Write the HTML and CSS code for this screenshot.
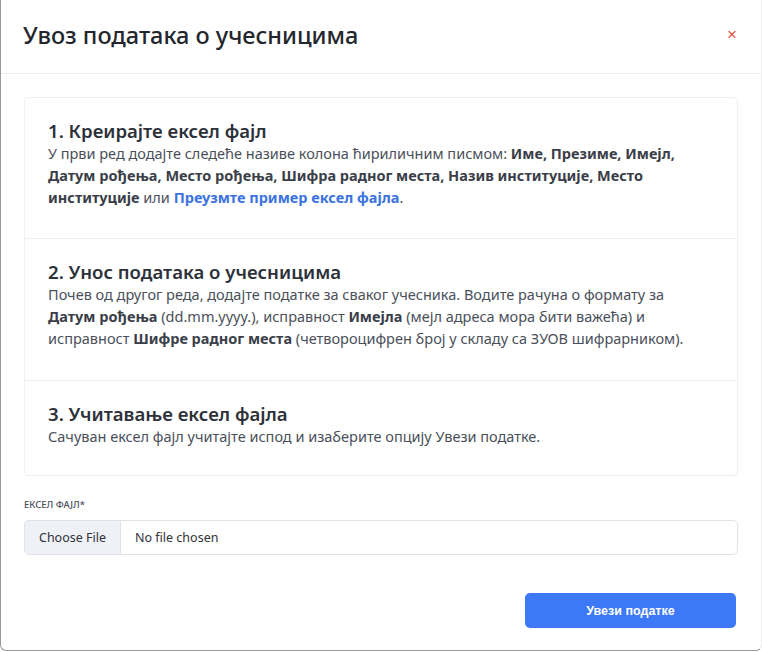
FILE: index.html
```html
<!DOCTYPE html>
<html lang="sr">
<head>
    <meta charset="UTF-8">
    <meta name="viewport" content="width=device-width, initial-scale=1.0">
    <title>Увоз података о учесницима</title>
    <link rel="stylesheet" href="styles.css">
</head>
<body>
    <div class="modal">
        <div class="modal-header">
            <h2>Увоз података о учесницима</h2>
            <button class="close" type="button">&times;</button>
        </div>
        <div class="modal-body">
            <div class="steps">
                <div class="step">
                    <h3>1. Креирајте ексел фајл</h3>
                    <p>У први ред додајте следеће називе колона ћириличним писмом: <b>Име, Презиме, Имејл, Датум рођења, Место рођења, Шифра радног места, Назив институције, Место институције</b> или <a href="#">Преузмте пример ексел фајла</a>.</p>
                </div>
                <div class="step">
                    <h3>2. Унос података о учесницима</h3>
                    <p>Почев од другог реда, додајте податке за сваког учесника. Водите рачуна о формату за <b>Датум рођења</b> (dd.mm.yyyy.), исправност <b>Имејла</b> (мејл адреса мора бити важећа) и исправност <b>Шифре радног места</b> (четвороцифрен број у складу са ЗУОВ шифрарником).</p>
                </div>
                <div class="step">
                    <h3>3. Учитавање ексел фајла</h3>
                    <p>Сачуван ексел фајл учитајте испод и изаберите опцију Увези податке.</p>
                </div>
            </div>

            <label class="field-label">Ексел фајл*</label>
            <div class="file-input">
                <span class="file-btn">Choose File</span>
                <span class="file-name">No file chosen</span>
            </div>
        </div>
        <div class="modal-footer">
            <button class="submit" type="button">Увези податке</button>
        </div>
    </div>
</body>
</html>
```

FILE: styles.css
```css
*,
*:before,
*:after {
    margin: 0;
    padding: 0;
    box-sizing: border-box;
}

body {
    font-family: "Noto Sans", "Open Sans", sans-serif;
    background-color: #ffffff;
    color: #3a3f4b;
    width: 762px;
    height: 652px;
    overflow: hidden;
}

.modal {
    width: 762px;
    height: 651px;
    background: #fff;
    border-left: 1px solid #9a9a9a;
    border-bottom: 1px solid #9a9a9a;
    border-right: 1px solid #ececec;
    border-radius: 0 0 6px 6px;
    display: flex;
    flex-direction: column;
}

.modal-header {
    height: 74px;
    border-bottom: 1px solid #eceef1;
    display: flex;
    align-items: center;
    justify-content: space-between;
    padding: 0 24px 4px 22px;
}

.modal-header h2 {
    font-size: 23.5px;
    font-weight: 500;
    color: #23262d;
}

.close {
    background: none;
    border: none;
    color: #e0533f;
    font-size: 17px;
    line-height: 1;
    font-family: "Liberation Sans", sans-serif;
    cursor: pointer;
}

.modal-body {
    padding: 23px 23px 0 23px;
}

.steps {
    border: 1px solid #eef0f3;
    border-radius: 4px;
}

.step {
    padding: 21px 23px 0 23px;
    border-bottom: 1px solid #eef0f3;
}

.step:nth-child(1) {
    height: 141px;
}

.step:nth-child(2) {
    height: 142px;
}

.step:last-child {
    border-bottom: none;
    height: 94px;
}

.step h3 {
    font-size: 18.6px;
    font-weight: 600;
    color: #2d313a;
    line-height: 23px;
}

.step p {
    font-size: 14.5px;
    line-height: 22px;
    color: #4a4f5a;
}

.step p b {
    font-weight: 700;
    color: #3a3e48;
}

.step p a {
    color: #3b73e0;
    font-weight: 700;
    text-decoration: none;
}

.field-label {
    display: block;
    margin-top: 22px;
    font-size: 9.5px;
    text-transform: uppercase;
    color: #4a4f5a;
    font-weight: 500;
}

.file-input {
    margin-top: 9px;
    height: 35px;
    border: 1px solid #dfe2e6;
    border-radius: 5px;
    display: flex;
    align-items: center;
    font-size: 12.5px;
    color: #2e323a;
    overflow: hidden;
}

.file-btn {
    background: #eef1f5;
    height: 100%;
    width: 96px;
    display: flex;
    align-items: center;
    justify-content: center;
    border-right: 1px solid #dfe2e6;
}

.file-name {
    padding-left: 14px;
}

.modal-footer {
    display: flex;
    justify-content: flex-end;
    padding: 38px 25px 0 0;
}

.submit {
    width: 211px;
    height: 35px;
    background: #3d78f7;
    color: #fff;
    border: none;
    border-radius: 5px;
    font-family: "Liberation Sans", sans-serif;
    font-weight: bold;
    font-size: 12.5px;
    cursor: pointer;
}
```
